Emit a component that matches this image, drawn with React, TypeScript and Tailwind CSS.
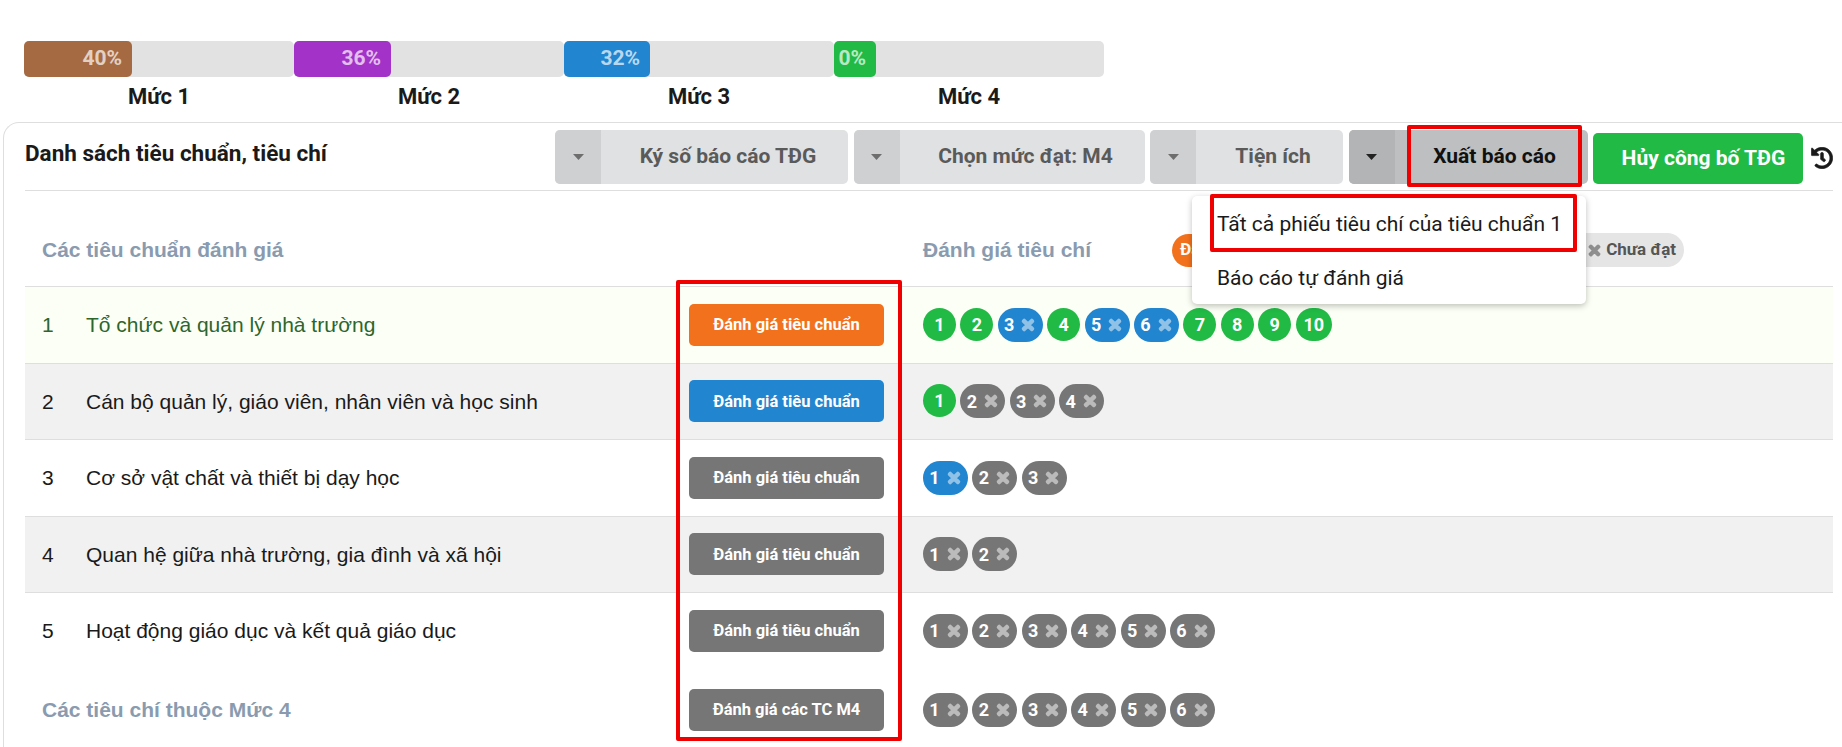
import React from "react";
import { FaHistory, FaTimes } from "react-icons/fa";

const bars = [
  { label: "Mức 1", pct: "40%", w: "w-[108px]", bg: "bg-[#a66a43]" },
  { label: "Mức 2", pct: "36%", w: "w-[97px]", bg: "bg-[#a333c8]" },
  { label: "Mức 3", pct: "32%", w: "w-[86px]", bg: "bg-[#2185d0]" },
  { label: "Mức 4", pct: "0%", w: "w-[42px]", bg: "bg-[#21ba45]" },
];

type Pill = [string, "g" | "b" | "n"];
const g = (n: number | string): Pill => [String(n), "g"];
const b = (n: number | string): Pill => [String(n), "b"];
const n = (x: number | string): Pill => [String(x), "n"];
const greys = (c: number) => Array.from({ length: c }, (_, i) => n(i + 1));

const rows = [
  { no: "1", name: "Tổ chức và quản lý nhà trường", btn: "bg-[#f2711c]", row: "bg-[#fcfff5] text-[#2c662d]", pills: [g(1), g(2), b(3), g(4), b(5), b(6), g(7), g(8), g(9), g(10)] },
  { no: "2", name: "Cán bộ quản lý, giáo viên, nhân viên và học sinh", btn: "bg-[#2185d0]", row: "bg-[#f1f1f1] text-[#1a1a1a]", pills: [g(1), n(2), n(3), n(4)] },
  { no: "3", name: "Cơ sở vật chất và thiết bị dạy học", btn: "bg-[#767676]", row: "bg-white text-[#1a1a1a]", pills: [b(1), n(2), n(3)] },
  { no: "4", name: "Quan hệ giữa nhà trường, gia đình và xã hội", btn: "bg-[#767676]", row: "bg-[#f1f1f1] text-[#1a1a1a]", pills: greys(2) },
  { no: "5", name: "Hoạt động giáo dục và kết quả giáo dục", btn: "bg-[#767676]", row: "bg-white text-[#1a1a1a]", pills: greys(6) },
];

function Chip({ p }: { p: Pill }) {
  if (p[1] === "g") {
    return (
      <span className="flex h-[33px] min-w-[33px] items-center justify-center rounded-full bg-[#21ba45] px-[8px] text-[18px] font-bold text-white">
        {p[0]}
      </span>
    );
  }
  const bg = p[1] === "b" ? "bg-[#2185d0]" : "bg-[#767676]";
  return (
    <span className={`flex h-[34px] w-[45px] items-center justify-center gap-[6px] rounded-[17px] text-[18px] font-bold text-white ${bg}`}>
      {p[0]}
      <FaTimes className="stroke-[50] text-[16px] opacity-50" />
    </span>
  );
}

function Pills({ pills }: { pills: Pill[] }) {
  return (
    <div className="flex gap-[4.4px]">
      {pills.map((p, i) => (
        <Chip key={i} p={p} />
      ))}
    </div>
  );
}

function Caret({ dark }: { dark?: boolean }) {
  return (
    <svg width="11" height="6" viewBox="0 0 11 6" className={dark ? "fill-[#222]" : "fill-[#6e6e6e]"}>
      <path d="M0 0h11L5.5 6z" />
    </svg>
  );
}

function SplitButton({ label, w, active }: { label: string; w: string; active?: boolean }) {
  return (
    <div className={`flex h-[54px] overflow-hidden rounded-[5px] text-[21px] font-bold ${w} ${active ? "bg-[#bebfc0] text-[#111]" : "bg-[#e0e1e2] text-[#5a5a5a]"}`}>
      <span className={`flex w-[46px] shrink-0 items-center justify-center ${active ? "bg-[#b3b4b5]" : "bg-[#cfd0d2]"}`}>
        <Caret dark={active} />
      </span>
      <span className="flex flex-1 items-center justify-center pl-[7px]">{label}</span>
    </div>
  );
}

function EvalButton({ label, bg }: { label: string; bg: string }) {
  return (
    <span className={`flex h-[42px] w-[195px] shrink-0 items-center justify-center rounded-[5px] pt-[2px] text-[16.5px] font-bold text-white ${bg}`}>
      {label}
    </span>
  );
}

export default function App() {
  return (
    <div className="relative h-[747px] overflow-hidden bg-white font-['Roboto',sans-serif] text-[#1a1a1a]">
      <div className="flex pl-[24px] pt-[41px]">
        {bars.map((bar) => (
          <div key={bar.label} className="w-[270px]">
            <div className="h-[36px] rounded-[5px] bg-[#e2e2e2]">
              <div className={`flex h-full items-center justify-end rounded-[5px] pr-[10px] text-[21px] font-bold text-white/70 ${bar.w} ${bar.bg}`}>
                {bar.pct}
              </div>
            </div>
            <div className="mt-[8px] h-[24px] text-center text-[22px] font-bold leading-[24px]">{bar.label}</div>
          </div>
        ))}
      </div>

      <div className="ml-[3px] mt-[13px] rounded-tl-[16px] border-l border-t border-[#dedede] pl-[21px] pr-[9px]">
        <div className="flex h-[68px] items-start justify-between border-b border-[#dedede] pt-[7px]">
          <h2 className="mt-[9px] text-[22.5px] font-bold leading-[28px]">Danh sách tiêu chuẩn, tiêu chí</h2>
          <div className="flex items-end gap-[5.5px]">
            <SplitButton label="Ký số báo cáo TĐG" w="w-[293px]" />
            <SplitButton label="Chọn mức đạt: M4" w="w-[291px]" />
            <SplitButton label="Tiện ích" w="w-[193px]" />
            <SplitButton label="Xuất báo cáo" w="w-[239px]" active />
            <span className="flex h-[51px] w-[210px] items-center justify-center rounded-[5px] bg-[#21ba45] pl-[11px] text-[21px] font-bold text-white">
              Hủy công bố TĐG
            </span>
            <FaHistory className="mb-[15px] ml-[2.5px] stroke-[15] text-[22px] text-[#1a1a1a]" />
          </div>
        </div>

        <div className="flex h-[95px] items-center pl-[17px] pt-[23px] font-['Liberation_Sans',sans-serif] text-[21px] font-bold text-[#8a9bb0]">
          <span className="w-[881px]">Các tiêu chuẩn đánh giá</span>
          <span className="w-[249px]">Đánh giá tiêu chí</span>
          <div className="flex w-[512px] items-center justify-between font-['Roboto',sans-serif] text-[17px]">
            <span className="flex h-[33px] items-center rounded-full bg-[#f2711c] px-[8px] text-white">Đang đánh giá</span>
            <span className="flex h-[34px] items-center gap-[4px] rounded-full bg-[#e5e5e5] pl-[17px] pr-[8px] text-[#555]">
              <FaTimes className="stroke-[50] text-[15px] text-[#8f8f8f]" />
              Chưa đạt
            </span>
          </div>
        </div>

        {rows.map((r) => (
          <div key={r.no} className={`flex h-[76.5px] items-center border-t border-[#dedede] pl-[17px] font-['Liberation_Sans',sans-serif] text-[21px] ${r.row}`}>
            <span className="w-[44px]">{r.no}</span>
            <span className="w-[603px]">{r.name}</span>
            <div className="flex items-center font-['Roboto',sans-serif]">
              <EvalButton label="Đánh giá tiêu chuẩn" bg={r.btn} />
              <div className="ml-[39px]">
                <Pills pills={r.pills} />
              </div>
            </div>
          </div>
        ))}

        <div className="flex h-[82px] items-center pl-[17px]">
          <span className="w-[647px] font-['Liberation_Sans',sans-serif] text-[21px] font-bold text-[#8a9bb0]">Các tiêu chí thuộc Mức 4</span>
          <EvalButton label="Đánh giá các TC M4" bg="bg-[#767676]" />
          <div className="ml-[39px]">
            <Pills pills={greys(6)} />
          </div>
        </div>
      </div>

      {/* open dropdown */}
      <div className="absolute left-[1192px] top-[196px] h-[108px] w-[394px] rounded-[5px] bg-white pt-[2px] text-[21px] text-[#1a1a1a] shadow-[0_2px_6px_rgba(0,0,0,0.25)]">
        <div className="flex h-[54px] items-center pl-[25px]">Tất cả phiếu tiêu chí của tiêu chuẩn 1</div>
        <div className="flex h-[54px] items-center pl-[25px]">Báo cáo tự đánh giá</div>
      </div>

      {/* red highlight boxes */}
      <div className="absolute left-[1407px] top-[125px] h-[62px] w-[175px] rounded-[2px] border-4 border-[#f00000]" />
      <div className="absolute left-[1210px] top-[194px] h-[58px] w-[367px] rounded-[2px] border-4 border-[#f00000]" />
      <div className="absolute left-[676px] top-[280px] h-[461px] w-[226px] rounded-[2px] border-4 border-[#f00000]" />
    </div>
  );
}
